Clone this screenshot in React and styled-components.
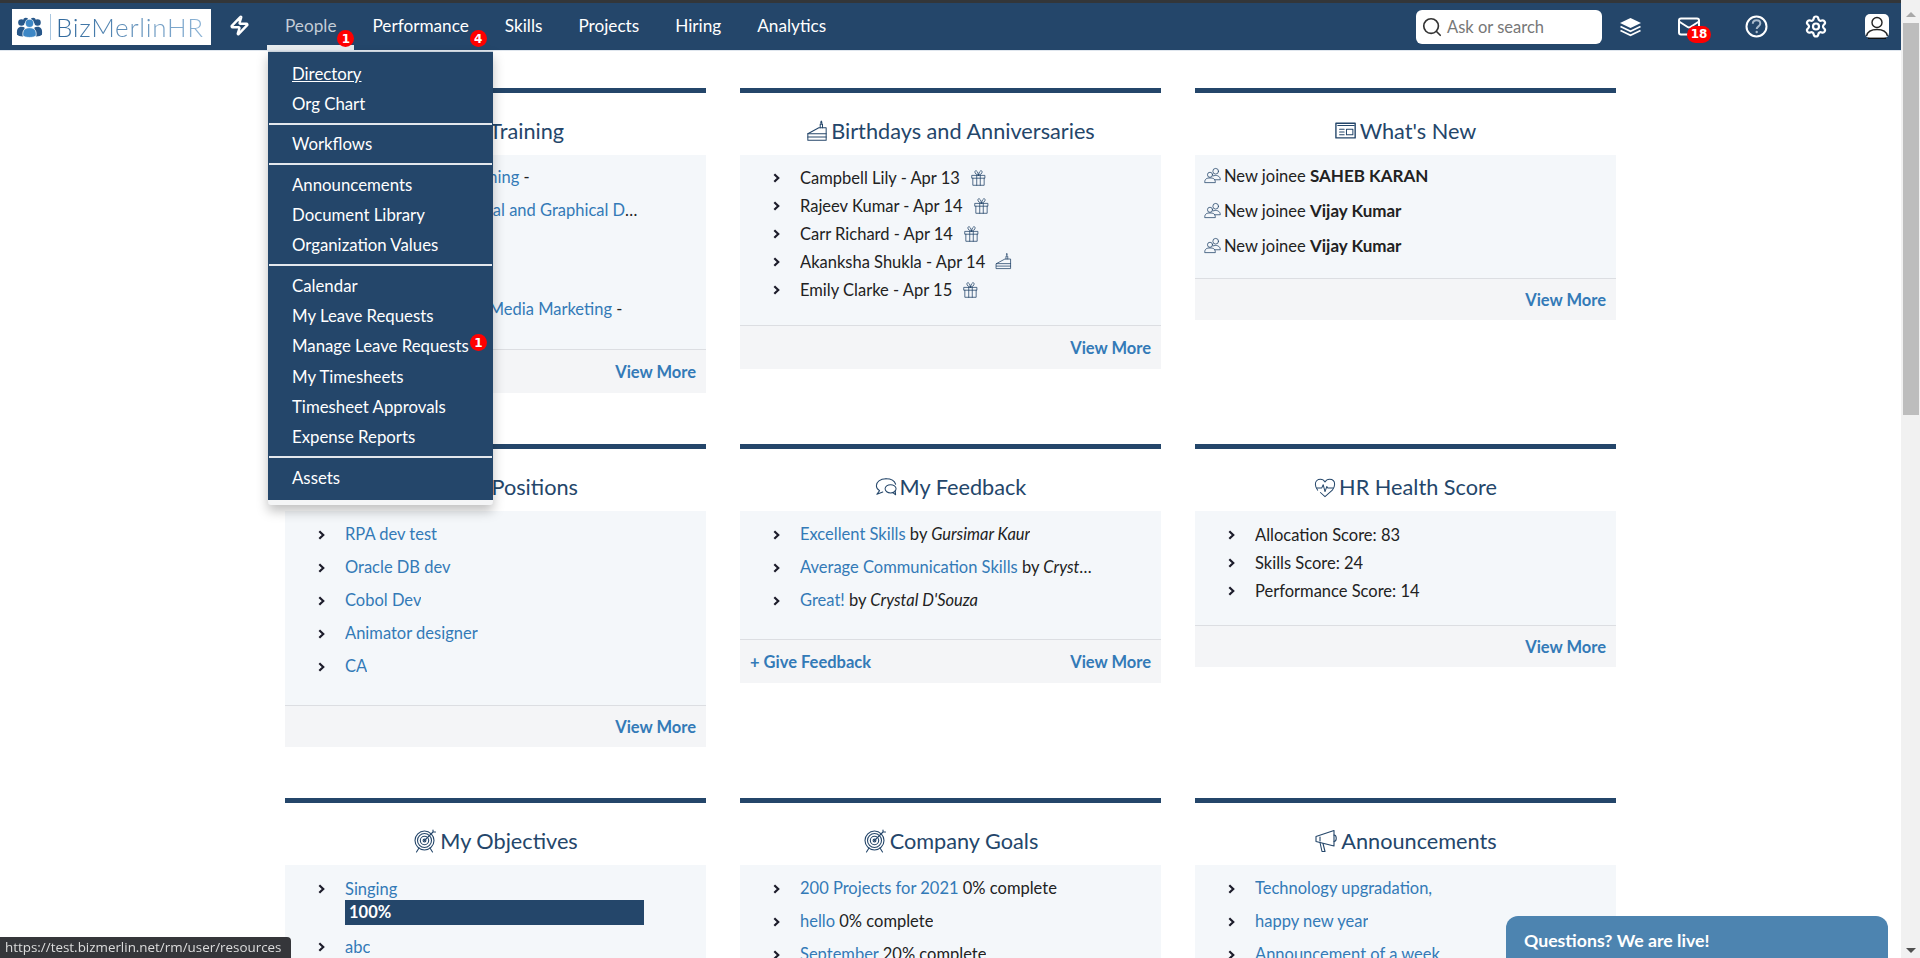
import React from "react";
import styled, { createGlobalStyle } from "styled-components";
import { Zap, Search, Mail, Settings } from "lucide-react";

const navy = "#24466a";
const linkBlue = "#337ab7";

const GlobalStyle = createGlobalStyle`
  html, body {
    margin: 0;
    height: 100%;
    overflow: hidden;
    background: #fff;
  }
  body {
    font-family: "Lato", "Liberation Sans", sans-serif;
    font-size: 16.5px;
    color: #222;
  }
  * {
    box-sizing: border-box;
  }
`;

const Page = styled.div`
  display: flex;
  height: 958px;
  overflow: hidden;
`;

const Main = styled.div`
  flex: 1;
  min-width: 0;
`;

const TopStrip = styled.div`
  height: 3px;
  background: #333639;
`;

const NavBar = styled.nav`
  display: flex;
  align-items: stretch;
  height: 48px;
  background: ${navy};
  border-bottom: 1px solid #dfe6ee;
  padding-left: 12px;
  position: relative;
`;

const LogoBox = styled.div`
  display: flex;
  align-items: center;
  width: 199px;
  height: 36px;
  margin-top: 6px;
  padding-left: 4px;
  background: #fff;
  svg {
    flex: none;
  }
`;

const LogoRule = styled.span`
  width: 1px;
  height: 26px;
  margin: 0 5px 0 7px;
  background: #a9c6df;
`;

const LogoText = styled.span`
  font-size: 26px;
  font-weight: 300;
  letter-spacing: 0.7px;
  line-height: 36px;
  background: linear-gradient(90deg, #2f689c, #8db4d6);
  -webkit-background-clip: text;
  background-clip: text;
  color: transparent;
`;

const BoltLink = styled.a`
  display: flex;
  align-items: center;
  justify-content: center;
  width: 56px;
  color: #fff;
  margin-bottom: 3px;
`;

const NavItem = styled.a`
  position: relative;
  display: flex;
  align-items: center;
  padding: 0 18px 3px;
  color: ${(p) => (p.$active ? "#c3ccd6" : "#fff")};
  font-size: 17.2px;
  box-shadow: ${(p) => (p.$active ? "inset 0 -5px 0 #e8ecef" : "none")};
`;

const Badge = styled.span`
  position: absolute;
  display: flex;
  align-items: center;
  justify-content: center;
  width: 17px;
  height: 17px;
  border-radius: 50%;
  background: #f00;
  color: #fff;
  font-family: "DejaVu Sans", sans-serif;
  font-size: 12px;
  font-weight: 700;
  line-height: 1;
`;

const NavBadge = styled(Badge)`
  right: 0;
  top: 27px;
  z-index: 3;
`;

const NavRight = styled.div`
  display: flex;
  align-items: center;
  margin-left: auto;
  padding-right: 12px;
`;

const SearchBox = styled.div`
  display: flex;
  align-items: center;
  gap: 4px;
  width: 186px;
  height: 34px;
  padding-left: 5px;
  border-radius: 6px;
  background: #fff;
  color: #777;
  font-size: 16.5px;
  svg {
    color: #333;
  }
`;

const IconSlot = styled.span`
  position: relative;
  display: flex;
  align-items: center;
  justify-content: center;
  width: 24px;
  height: 24px;
  margin-left: ${(p) => p.$left}px;
  color: #fff;
`;

const MailBadge = styled(Badge)`
  width: 24px;
  left: 10px;
  top: 11px;
  border-radius: 9px;
  font-size: 12px;
`;

const Dropdown = styled.div`
  position: absolute;
  z-index: 2;
  left: 1px;
  top: 48px;
  width: 225px;
  padding: 7px 1px 7px;
  background: ${navy};
  border-top: 1px solid #c9d2db;
  border-bottom: 5px solid #f4f5f6;
  border-radius: 0 0 3px 3px;
  box-shadow: 0 6px 12px rgba(0, 0, 0, 0.25);
`;

const MenuLink = styled.a`
  position: relative;
  display: block;
  height: ${(p) => (p.$tall ? 31 : 30)}px;
  padding-left: 23px;
  color: #fff;
  font-size: 16.8px;
  line-height: 30px;
  text-decoration: ${(p) => (p.$current ? "underline" : "none")};
`;

const MenuBadge = styled(Badge)`
  left: 201px;
  top: 3px;
`;

const MenuRule = styled.hr`
  height: 2px;
  margin: 4px 0 ${(p) => (p.$tight ? 4 : 5)}px;
  border: 0;
  background: #e3e8ed;
`;

const Grid = styled.main`
  display: grid;
  grid-template-columns: repeat(3, 421px);
  column-gap: 34px;
  row-gap: 51px;
  align-items: start;
  width: 1331px;
  margin: 0 auto;
  padding-top: 37px;
`;

const CardBox = styled.section`
  border-top: 5px solid ${navy};
`;

const CardTitle = styled.h2`
  display: flex;
  align-items: center;
  justify-content: center;
  gap: 3px;
  height: 62px;
  margin: 0;
  padding-top: 13px;
  color: ${navy};
  font-size: 21.7px;
  font-weight: 400;
`;

const CardBody = styled.div`
  background: #f4f7fa;
`;

const List = styled.ul`
  list-style: none;
  margin: 0;
  padding: ${(p) => p.$top}px 0 ${(p) => p.$bottom}px;
  display: flex;
  flex-direction: column;
  gap: ${(p) => p.$gap || 0}px;
`;

const Row = styled.li`
  display: flex;
  align-items: flex-start;
  min-width: 0;
  padding-left: 33px;
  line-height: ${(p) => p.$line}px;
`;

const BulletSlot = styled.span`
  display: flex;
  align-items: center;
  flex: none;
  width: 27px;
  height: ${(p) => p.$line}px;
`;

const RowText = styled.span`
  max-width: 298px;
  white-space: nowrap;
  overflow: hidden;
  text-overflow: ellipsis;
`;

const RowStack = styled.div`
  display: flex;
  flex-direction: column;
  min-width: 0;
`;

const Link = styled.a`
  color: ${linkBlue};
  text-decoration: none;
`;

const SmallIcon = styled.span`
  display: inline-flex;
  vertical-align: -2px;
  margin-left: 10px;
`;

const NewsRow = styled.li`
  display: flex;
  align-items: center;
  gap: 3px;
  height: 35px;
  padding-left: 9px;
  b {
    font-size: 17px;
    font-weight: 700;
  }
`;

const ProgressBar = styled.div`
  width: 299px;
  height: 25px;
  padding-left: 4px;
  background: ${navy};
  color: #fff;
  font-weight: 700;
  line-height: 25px;
`;

const CardFooter = styled.footer`
  display: flex;
  align-items: center;
  justify-content: space-between;
  height: ${(p) => (p.$compact ? 42 : 44)}px;
  padding: 0 10px;
  background: #f4f5f7;
  border-top: 1px solid #dcdee2;
`;

const FooterLink = styled.a`
  margin-left: ${(p) => (p.$push ? "auto" : "0")};
  color: ${linkBlue};
  font-weight: 700;
`;

const Scrollbar = styled.aside`
  display: flex;
  flex-direction: column;
  align-items: center;
  flex: none;
  width: 19px;
  height: 958px;
  padding: 12px 0 5px 1px;
  background: #f1f1f1;
`;

const ArrowUp = styled.span`
  width: 0;
  height: 0;
  border: 5px solid transparent;
  border-top: 0;
  border-bottom: 5px solid #a8a8a8;
`;

const ScrollThumb = styled.span`
  width: 16px;
  height: 392px;
  margin-top: 6px;
  background: #bdbdbd;
`;

const ArrowDown = styled.span`
  width: 0;
  height: 0;
  margin-top: auto;
  border: 5px solid transparent;
  border-bottom: 0;
  border-top: 5px solid #505050;
`;

const StatusTip = styled.div`
  position: fixed;
  left: 0;
  bottom: 0;
  width: 291px;
  height: 21px;
  padding-left: 5px;
  background: #35363a;
  border-radius: 0 4px 0 0;
  color: #dcdcdc;
  font-family: "Open Sans", "Liberation Sans", sans-serif;
  font-size: 13.4px;
  line-height: 21px;
  white-space: nowrap;
`;

const ChatTab = styled.div`
  position: fixed;
  left: 1506px;
  bottom: 0;
  width: 382px;
  height: 42px;
  padding: 14px 0 0 18px;
  background: #4d84b0;
  border-radius: 12px 12px 0 0;
  color: #fff;
  font-size: 17.7px;
  font-weight: 700;
  line-height: 22px;
`;

const Chevron = () => (
  <svg width="7" height="10" viewBox="0 0 8 11">
    <path d="M1.5 1.2 L6 5.5 L1.5 9.8" fill="none" stroke="#1d1d2b" strokeWidth="2.5" />
  </svg>
);

const Line = ({ size = 24, children }) => (
  <svg
    width={size}
    height={size}
    viewBox="0 0 24 24"
    fill="none"
    stroke={navy}
    strokeWidth="1.1"
    strokeLinecap="round"
    strokeLinejoin="round"
  >
    {children}
  </svg>
);

const CakeIcon = ({ size }) => (
  <Line size={size}>
    <path d="M2 15 L14 8.5 H22 V22 H2 Z" />
    <path d="M2 15 H22 M2 18.5 H22" />
    <path d="M15.5 8.5 V4.5 H18 V8.5" />
    <path d="M16.7 1.2 C15.8 2.4 16 3.4 16.7 3.6 C17.5 3.4 17.6 2.4 16.7 1.2 Z" />
  </Line>
);

const GiftIcon = () => (
  <Line size={17}>
    <path d="M3 9 H21 V13 H3 Z M4 13 V23 H20 V13" />
    <path d="M9.5 9 V23 M14.5 9 V23" />
    <path d="M12 8.5 C9 8 6.5 6.5 7 3.5 C7.8 1 11 2.5 12 8.5 Z M12 8.5 C15 8 17.5 6.5 17 3.5 C16.2 1 13 2.5 12 8.5 Z" />
  </Line>
);

const NewsIcon = () => (
  <Line size={22}>
    <path d="M1 3.5 H22 V19.5 H1 Z" strokeWidth="1.5" />
    <path d="M3 6 H21 M5 10 H10 M5 13 H10 M5 16 H10" />
    <path d="M12.5 10 H19.5 V16 H12.5 Z" />
  </Line>
);

const PeopleIcon = () => (
  <Line size={17}>
    <circle cx="8.5" cy="11" r="3.6" />
    <circle cx="16.5" cy="6" r="4" />
    <path d="M1 21.5 C1 16.5 4 15.5 8.5 15.5 C13 15.5 16 16.5 16 21.5 Z" />
    <path d="M13 12.5 C17 11 23 12 23 18 H15" />
  </Line>
);

const ChatIcon = () => (
  <Line size={22}>
    <path d="M12 3 C5.5 3 1.5 6.5 1.5 10.5 C1.5 13 3 14.8 5 16 L2 20 L8.5 17.5" />
    <path d="M12 3 C17.5 3 21.5 5.5 22.5 9" />
    <ellipse cx="17" cy="14" rx="6" ry="4.5" />
    <path d="M19.5 18 L22.5 20.5 L22 16" />
  </Line>
);

const HeartIcon = () => (
  <Line size={22}>
    <path d="M4 15.5 C2 13 1.5 11 1.5 9 C1.5 5.5 4 3.5 7 3.5 C9.2 3.5 11 4.7 12 6.5 C13 4.7 14.8 3.5 17 3.5 C20 3.5 22.5 5.5 22.5 9 C22.5 11 22 13 20 15.5 L12 22.5 L7 18" />
    <path d="M3 13 H8.5 L10 9.5 L12 17 L14 11.5 L15 13 H21" />
  </Line>
);

const TargetIcon = () => (
  <Line size={24}>
    <circle cx="11.5" cy="11.5" r="9.5" />
    <circle cx="11.5" cy="11.5" r="7" />
    <circle cx="11.5" cy="11.5" r="4.2" />
    <circle cx="11.5" cy="11.5" r="1.4" />
    <path d="M11.5 11.5 L20 3 M20 3 V1 M20 3 H22.5" />
    <path d="M6 19 L3.5 23 M17 19 L19.5 23" />
  </Line>
);

const MegaphoneIcon = () => (
  <Line size={24}>
    <path d="M2 7.5 L20 1.5 V17 L2 12.5 Z" />
    <path d="M6 13.5 L8 22.5 H11 L9 14.5" />
    <path d="M20 6 C23 6 23 12.5 20 12.5" />
    <path d="M6 8 V12" />
  </Line>
);

const LogoMark = () => (
  <svg width="27" height="22" viewBox="0 0 36 30">
    <g fill="#27578a">
      <circle cx="7" cy="9" r="4.4" />
      <circle cx="29" cy="9" r="4.4" />
      <path d="M1 25 C0 17 3 14.5 7 14.5 C9 14.5 10.5 15 11.5 16 L9 28 C5 28 2 27 1 25 Z" />
      <path d="M35 25 C36 17 33 14.5 29 14.5 C27 14.5 25.5 15 24.5 16 L27 28 C31 28 34 27 35 25 Z" />
      <circle cx="13" cy="6" r="3.6" />
      <circle cx="23" cy="6" r="3.6" />
    </g>
    <circle cx="18" cy="10" r="5.6" fill="#3d87c6" stroke="#fff" strokeWidth="1" />
    <path d="M9 27 C8 19 12 16 18 16 C24 16 28 19 27 27 C24 30 12 30 9 27 Z" fill="#3d87c6" stroke="#fff" strokeWidth="1" />
  </svg>
);

const LayersIcon = () => (
  <svg width="23" height="20" viewBox="0 0 23 20">
    <path d="M11.5 1 L22 6 L11.5 11 L1 6 Z" fill="#fff" />
    <path d="M1.5 9.5 L11.5 14.3 L21.5 9.5 M1.5 13.5 L11.5 18.3 L21.5 13.5" fill="none" stroke="#fff" strokeWidth="1.7" />
  </svg>
);

const HelpIcon = () => (
  <svg width="23" height="23" viewBox="0 0 23 23">
    <circle cx="11.5" cy="11.5" r="10" fill="none" stroke="#fff" strokeWidth="2" />
    <path d="M7.8 8.8 C7.8 6.5 9.5 5.3 11.5 5.3 C13.7 5.3 15.3 6.7 15.3 8.6 C15.3 11.3 11.7 11.4 11.7 14" fill="none" stroke="#a9bacb" strokeWidth="2" />
    <circle cx="11.7" cy="17" r="1.2" fill="#a9bacb" />
  </svg>
);

const UserIcon = () => (
  <svg width="24" height="25" viewBox="0 0 24 25">
    <rect width="24" height="24" rx="5" fill="#fff" />
    <circle cx="12" cy="8.5" r="5" fill="none" stroke="#222" strokeWidth="1.4" />
    <path d="M1.5 22 C2.5 17.5 6.5 15.5 12 15.5 C17.5 15.5 21.5 17.5 22.5 22" fill="none" stroke="#222" strokeWidth="1.4" />
    <path d="M3 24.3 H21" stroke="#111" strokeWidth="1.4" />
  </svg>
);

const Card = ({ icon, title, link, compact, children }) => (
  <CardBox>
    <CardTitle>
      {icon}
      {title}
    </CardTitle>
    <CardBody>{children}</CardBody>
    <CardFooter $compact={compact}>
      {link}
      <FooterLink $push>View More</FooterLink>
    </CardFooter>
  </CardBox>
);

const Item = ({ line = 33, children }) => (
  <Row $line={line}>
    <BulletSlot $line={line}>
      <Chevron />
    </BulletSlot>
    <RowText>{children}</RowText>
  </Row>
);

const menu = [
  [{ label: "Directory", current: true }, { label: "Org Chart" }],
  [{ label: "Workflows" }],
  [{ label: "Announcements" }, { label: "Document Library" }, { label: "Organization Values" }],
  [
    { label: "Calendar" },
    { label: "My Leave Requests" },
    { label: "Manage Leave Requests", badge: 1 },
    { label: "My Timesheets" },
    { label: "Timesheet Approvals" },
    { label: "Expense Reports" },
  ],
  [{ label: "Assets" }],
];

const birthdays = [
  ["Campbell Lily - Apr 13", "gift"],
  ["Rajeev Kumar - Apr 14", "gift"],
  ["Carr Richard - Apr 14", "gift"],
  ["Akanksha Shukla - Apr 14", "cake"],
  ["Emily Clarke - Apr 15", "gift"],
];

const App = () => (
  <Page>
    <GlobalStyle />
    <Main>
      <TopStrip />
      <NavBar>
        <LogoBox>
          <LogoMark />
          <LogoRule />
          <LogoText>BizMerlinHR</LogoText>
        </LogoBox>
        <BoltLink>
          <Zap size={21} strokeWidth={2.8} />
        </BoltLink>
        <NavItem $active>
          People
          <NavBadge>1</NavBadge>
          <Dropdown>
            {menu.map((group, i) => (
              <div key={i}>
                {i > 0 && <MenuRule $tight={i === 1} />}
                {group.map((entry) => (
                  <MenuLink key={entry.label} $current={entry.current} $tall={entry.badge}>
                    {entry.label}
                    {entry.badge && <MenuBadge>{entry.badge}</MenuBadge>}
                  </MenuLink>
                ))}
              </div>
            ))}
          </Dropdown>
        </NavItem>
        <NavItem>
          Performance
          <NavBadge>4</NavBadge>
        </NavItem>
        <NavItem>Skills</NavItem>
        <NavItem>Projects</NavItem>
        <NavItem>Hiring</NavItem>
        <NavItem>Analytics</NavItem>
        <NavRight>
          <SearchBox>
            <Search size={22} strokeWidth={1.8} />
            Ask or search
          </SearchBox>
          <IconSlot $left={16}>
            <LayersIcon />
          </IconSlot>
          <IconSlot $left={35}>
            <Mail size={25} strokeWidth={2} />
            <MailBadge>18</MailBadge>
          </IconSlot>
          <IconSlot $left={43}>
            <HelpIcon />
          </IconSlot>
          <IconSlot $left={36}>
            <Settings size={25} strokeWidth={2.2} />
          </IconSlot>
          <IconSlot $left={37}>
            <UserIcon />
          </IconSlot>
        </NavRight>
      </NavBar>

      <Grid>
        <Card title="My Training" icon={<TargetIcon />}>
          <List $top={6} $bottom={23}>
            <Item>
              <Link>Advanced Excel Training</Link> -
            </Item>
            <Item>
              <Link>Certificates in a Visual and Graphical Design</Link> -
            </Item>
            <Item>
              <Link>Leadership</Link>
            </Item>
            <Item>
              <Link>Sales</Link>
            </Item>
            <Item>
              <Link>Certificate in Social Media Marketing</Link> -
            </Item>
          </List>
        </Card>

        <Card title="Birthdays and Anniversaries" icon={<CakeIcon size={22} />}>
          <List $top={9} $bottom={21}>
            {birthdays.map(([text, kind]) => (
              <Item key={text} line={28}>
                {text}
                <SmallIcon>{kind === "gift" ? <GiftIcon /> : <CakeIcon size={17} />}</SmallIcon>
              </Item>
            ))}
          </List>
        </Card>

        <Card title="What's New" icon={<NewsIcon />} compact>
          <List $top={3} $bottom={15}>
            <NewsRow>
              <PeopleIcon />
              <span>
                New joinee <b>SAHEB KARAN</b>
              </span>
            </NewsRow>
            <NewsRow>
              <PeopleIcon />
              <span>
                New joinee <b>Vijay Kumar</b>
              </span>
            </NewsRow>
            <NewsRow>
              <PeopleIcon />
              <span>
                New joinee <b>Vijay Kumar</b>
              </span>
            </NewsRow>
          </List>
        </Card>

        <Card title="Open Positions" icon={<PeopleIcon />} compact>
          <List $top={7} $bottom={22}>
            <Item><Link>RPA dev test</Link></Item>
            <Item><Link>Oracle DB dev</Link></Item>
            <Item><Link>Cobol Dev</Link></Item>
            <Item><Link>Animator designer</Link></Item>
            <Item><Link>CA</Link></Item>
          </List>
        </Card>

        <Card title="My Feedback" icon={<ChatIcon />} link={<FooterLink>+ Give Feedback</FooterLink>}>
          <List $top={7} $bottom={22}>
            <Item>
              <Link>Excellent Skills</Link> by <i>Gursimar Kaur</i>
            </Item>
            <Item>
              <Link>Average Communication Skills</Link> by <i>Crystal D'Souza</i>
            </Item>
            <Item>
              <Link>Great!</Link> by <i>Crystal D'Souza</i>
            </Item>
          </List>
        </Card>

        <Card title="HR Health Score" icon={<HeartIcon />} compact>
          <List $top={10} $bottom={20}>
            <Item line={28}>Allocation Score: 83</Item>
            <Item line={28}>Skills Score: 24</Item>
            <Item line={28}>Performance Score: 14</Item>
          </List>
        </Card>

        <Card title="My Objectives" icon={<TargetIcon />}>
          <List $top={13} $bottom={20} $gap={11}>
            <Row $line={22}>
              <BulletSlot $line={22}>
                <Chevron />
              </BulletSlot>
              <RowStack>
                <Link>Singing</Link>
                <ProgressBar>100%</ProgressBar>
              </RowStack>
            </Row>
            <Item line={22}><Link>abc</Link></Item>
          </List>
        </Card>

        <Card title="Company Goals" icon={<TargetIcon />}>
          <List $top={7} $bottom={22}>
            <Item><Link>200 Projects for 2021</Link> 0% complete</Item>
            <Item><Link>hello</Link> 0% complete</Item>
            <Item><Link>September</Link> 20% complete</Item>
          </List>
        </Card>

        <Card title="Announcements" icon={<MegaphoneIcon />}>
          <List $top={7} $bottom={22}>
            <Item><Link>Technology upgradation,</Link></Item>
            <Item><Link>happy new year</Link></Item>
            <Item><Link>Announcement of a week</Link></Item>
          </List>
        </Card>
      </Grid>
    </Main>

    <Scrollbar>
      <ArrowUp />
      <ScrollThumb />
      <ArrowDown />
    </Scrollbar>

    <StatusTip>https://test.bizmerlin.net/rm/user/resources</StatusTip>
    <ChatTab>Questions? We are live!</ChatTab>
  </Page>
);

export default App;
